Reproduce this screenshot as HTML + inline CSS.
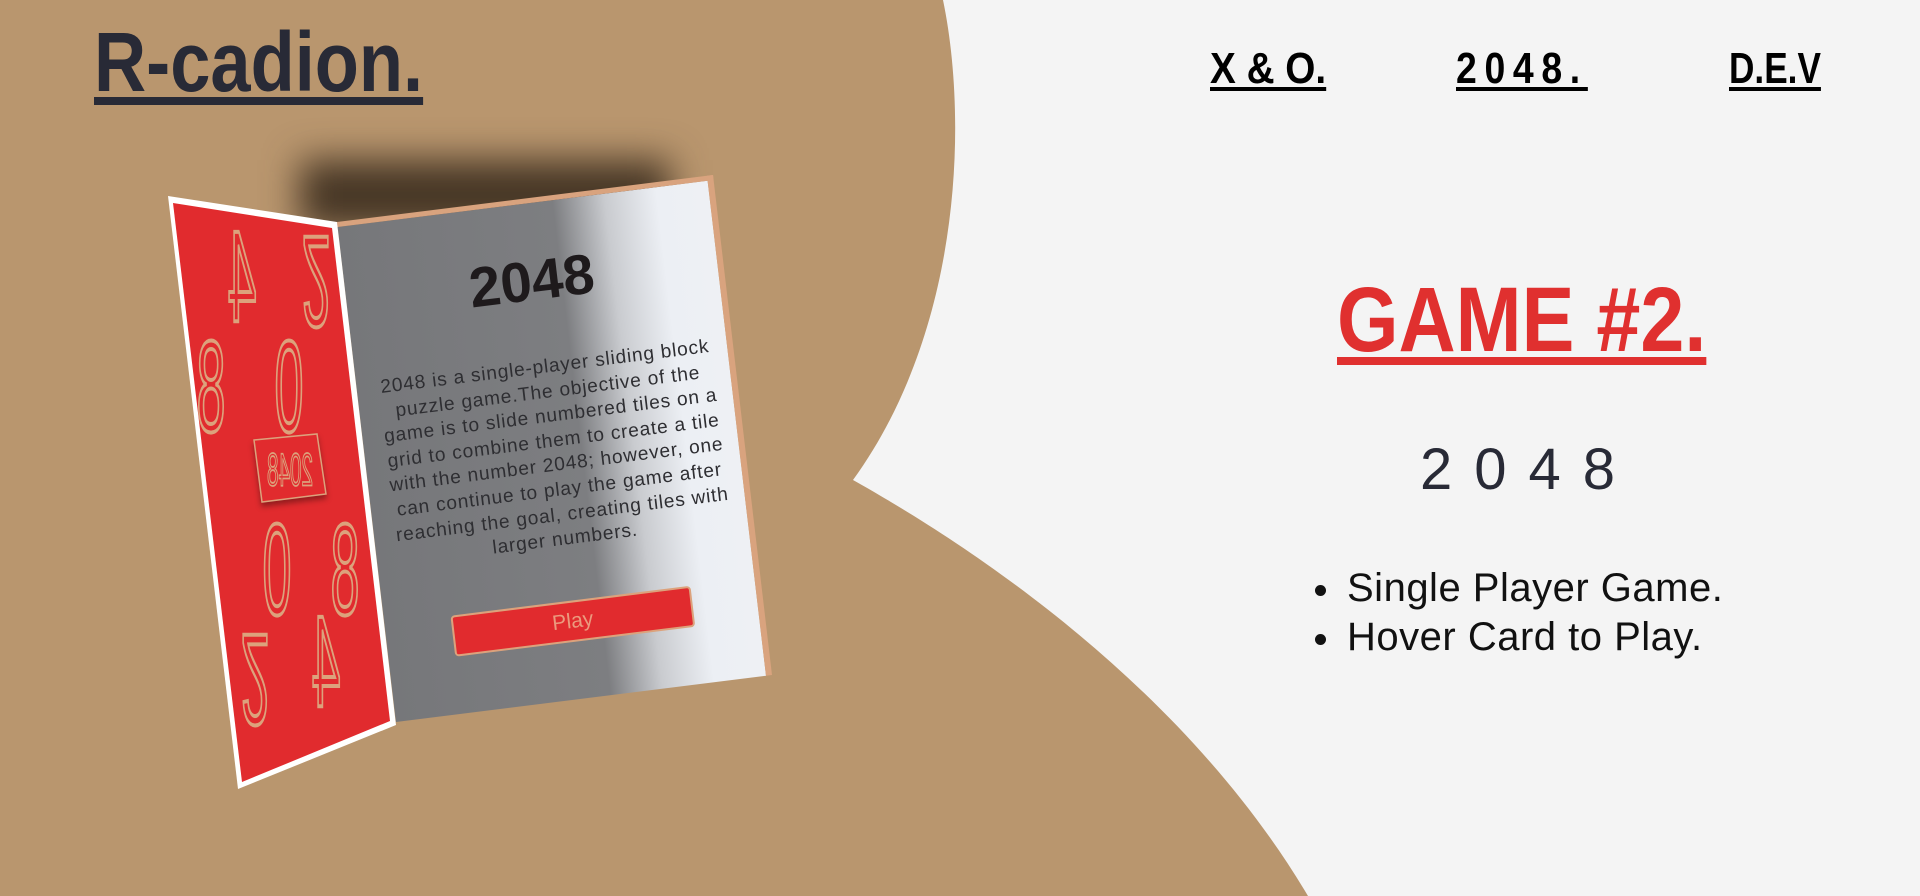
<!DOCTYPE html>
<html><head><meta charset="utf-8"><style>
*{margin:0;padding:0;box-sizing:border-box}
body{width:1920px;height:896px;overflow:hidden;background:#B9966E;font-family:"Liberation Sans",sans-serif;position:relative;color:#282a36}
.abs{position:absolute}
.sx{display:inline-block;transform-origin:0 0;white-space:nowrap}
.logo{left:94px;top:14px;font-size:84px;font-weight:bold;color:#282a36;text-decoration:underline;text-decoration-thickness:8px;text-underline-offset:6px;transform:scaleX(.86)}
.nav{top:44px;font-size:44px;font-weight:bold;color:#000;text-decoration:underline;text-decoration-thickness:4px;text-underline-offset:4px}
.game{left:1337px;top:268px;font-size:92px;font-weight:bold;color:#e0302f;text-decoration:underline;text-decoration-thickness:8px;text-underline-offset:6px;transform:scaleX(.86)}
.num{left:1420px;top:436px;font-size:58px;letter-spacing:22px;color:#282a36}
ul{position:absolute;left:1347px;top:564px;font-size:40px;letter-spacing:.5px;color:#111;list-style:none;line-height:49px}
ul li{position:relative}
ul li:before{content:"";position:absolute;left:-32px;top:21px;width:11px;height:11px;border-radius:50%;background:#111}
.panel{left:337px;top:222px;width:376px;height:500px;transform-origin:0 0;transform:matrix(1,-0.125,0.118,1,0,0);
background:linear-gradient(90deg,#76777a 0%,#7d7e81 58%,#c9cbcf 72%,#eceff4 86%,#eef0f4 100%);border-top:5px solid #d9a37e;border-right:6px solid #d9a37e;text-align:center}
.panel h2{position:absolute;left:0;width:100%;top:44px;font-size:56px;font-weight:bold;color:#1e1a1c}
.panel p{position:absolute;left:-6px;width:388px;top:152px;font-size:19px;letter-spacing:.8px;line-height:24.6px;color:#2e2e32;white-space:nowrap}
.panel .btn{position:absolute;left:66px;top:397px;width:240px;height:41px;background:#e12b2e;border:2px solid #dca27c;border-radius:4px;color:#eb9a7e;font-size:21px;line-height:37px}
</style></head><body>
<svg class="abs" style="left:0;top:0" width="1920" height="896">
<path d="M943,0 C968,120 962,330 853,480 C960,540 1180,680 1308,896 L1920,896 L1920,0 Z" fill="#F4F4F4"/>
</svg>
<div class="abs" style="left:300px;top:160px;width:370px;height:70px;background:rgba(50,38,25,.85);filter:blur(18px)"></div>
<div class="abs panel">
<h2>2048</h2>
<p>2048 is a single-player sliding block<br>puzzle game.The objective of the<br>game is to slide numbered tiles on a<br>grid to combine them to create a tile<br>with the number 2048; however, one<br>can continue to play the game after<br>reaching the goal, creating tiles with<br>larger numbers.</p>
<div class="btn">Play</div>
</div>
<svg class="abs" style="left:0;top:0" width="900" height="896">
<polygon points="168,196 337,222 396,725 238,789" fill="#fff"/>
<polygon points="173,203 332,228 390,721 242,782" fill="#e12b2e"/>
<g fill="none" stroke="#dca27c" stroke-width="4" font-family="Liberation Sans" font-size="130" text-anchor="middle" dominant-baseline="central">
<text transform="translate(242,276) scale(-0.4,1)">4</text>
<text transform="translate(316,282) scale(0.4,-1)">2</text>
<text transform="translate(211,386) scale(-0.4,1)">8</text>
<text transform="translate(289,386) scale(-0.4,1)">0</text>
<text transform="translate(277,569) scale(-0.4,1)">0</text>
<text transform="translate(345,569) scale(-0.4,1)">8</text>
<text transform="translate(255,680) scale(0.4,-1)">2</text>
<text transform="translate(326,661) scale(-0.4,1)">4</text>
</g>
<polygon points="254,440 317,434 326,494 262,502" fill="#e12b2e" stroke="#dca27c" stroke-width="1.5" style="filter:drop-shadow(0 4px 3px rgba(0,0,0,.35))"/>
<text transform="translate(290,470) scale(-0.45,1)" text-anchor="middle" dominant-baseline="central" font-family="Liberation Sans" font-size="46" fill="none" stroke="#dca27c" stroke-width="1.8">2048</text>
</svg>
<div class="abs sx logo">R-cadion.</div>
<div class="abs sx nav" style="left:1210px;transform:scaleX(.88)">X &amp; O.</div>
<div class="abs sx nav" style="left:1456px;letter-spacing:9px;transform:scaleX(.85)">2048.</div>
<div class="abs sx nav" style="left:1729px;transform:scaleX(.8)">D.E.V</div>
<div class="abs sx game">GAME #2.</div>
<div class="abs num">2048</div>
<ul><li>Single Player Game.</li><li>Hover Card to Play.</li></ul>
</body></html>
